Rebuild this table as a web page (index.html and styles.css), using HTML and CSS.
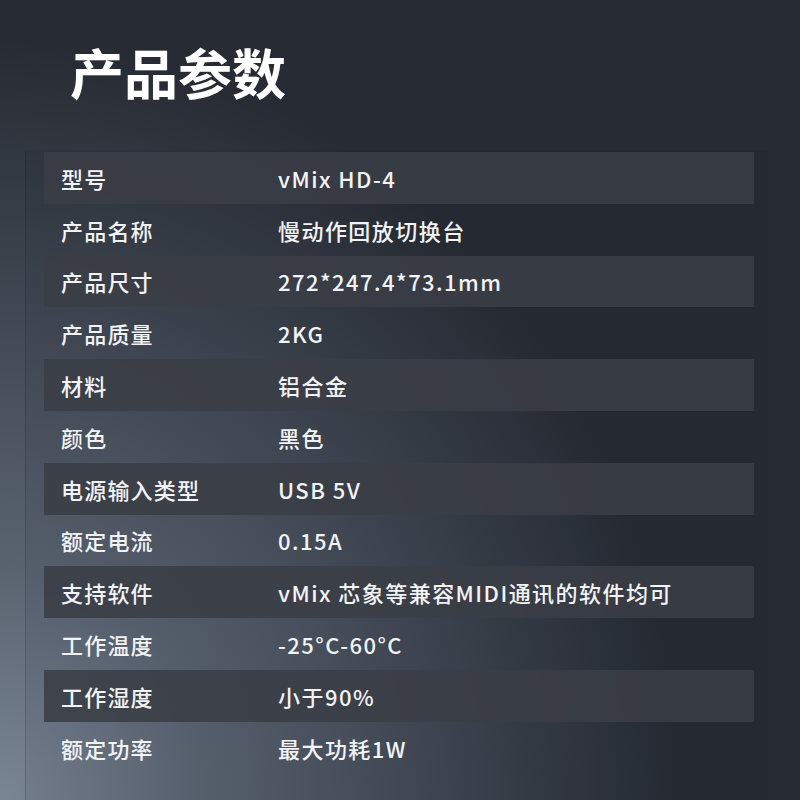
FILE: index.html
```html
<!DOCTYPE html>
<html lang="zh-CN">
<head>
<meta charset="utf-8">
<title>产品参数</title>
<link rel="stylesheet" href="styles.css">
</head>
<body>
<div class="page">
  <h1 class="title">产品参数</h1>
  <div class="panel">
    <div class="table">
      <div class="row alt"><div class="key">型号</div><div class="val">vMix HD-4</div></div>
      <div class="row"><div class="key">产品名称</div><div class="val">慢动作回放切换台</div></div>
      <div class="row alt"><div class="key">产品尺寸</div><div class="val">272*247.4*73.1mm</div></div>
      <div class="row"><div class="key">产品质量</div><div class="val">2KG</div></div>
      <div class="row alt"><div class="key">材料</div><div class="val">铝合金</div></div>
      <div class="row"><div class="key">颜色</div><div class="val">黑色</div></div>
      <div class="row alt"><div class="key">电源输入类型</div><div class="val">USB 5V</div></div>
      <div class="row"><div class="key">额定电流</div><div class="val">0.15A</div></div>
      <div class="row alt"><div class="key">支持软件</div><div class="val">vMix 芯象等兼容MIDI通讯的软件均可</div></div>
      <div class="row"><div class="key">工作温度</div><div class="val">-25°C-60°C</div></div>
      <div class="row alt"><div class="key">工作湿度</div><div class="val">小于90%</div></div>
      <div class="row"><div class="key">额定功率</div><div class="val">最大功耗1W</div></div>
    </div>
  </div>
</div>
</body>
</html>
```

FILE: styles.css
```css
html, body {
  margin: 0;
  padding: 0;
}
body {
  width: 800px;
  height: 800px;
  overflow: hidden;
  font-family: "Noto Sans CJK SC", "Noto Sans", sans-serif;
  color: #f2f3f5;
  background:
    radial-gradient(ellipse 85% 95% at 0% 100%, #7b8695 0%, #5a6471 30%, rgba(40,45,54,0) 100%),
    linear-gradient(180deg, #272b33 0%, #262b34 100%);
}
.page {
  display: flex;
  flex-direction: column;
  height: 800px;
}
.title {
  margin: 37px 0 0 70px;
  font-size: 54px;
  line-height: 70px;
  font-weight: 700;
  color: #ffffff;
}
.panel {
  margin: 43px 32px 0 25px;
  flex: 1;
  padding-left: 18px;
  padding-top: 2px;
  background: rgba(20, 24, 32, 0.06);
  border-left: 1px solid rgba(20, 24, 32, 0.18);
}
.table {
  width: 710px;
  display: flex;
  flex-direction: column;
}
.row {
  height: 51.8px;
  display: flex;
  align-items: center;
  font-size: 22px;
  font-weight: 500;
  letter-spacing: 1.2px;
}
.row.alt {
  background: rgba(58, 62, 70, 0.88);
}
.key {
  width: 217px;
  padding-left: 17px;
  flex-shrink: 0;
}
.val {
  flex: 1;
  letter-spacing: 1.45px;
}
```
